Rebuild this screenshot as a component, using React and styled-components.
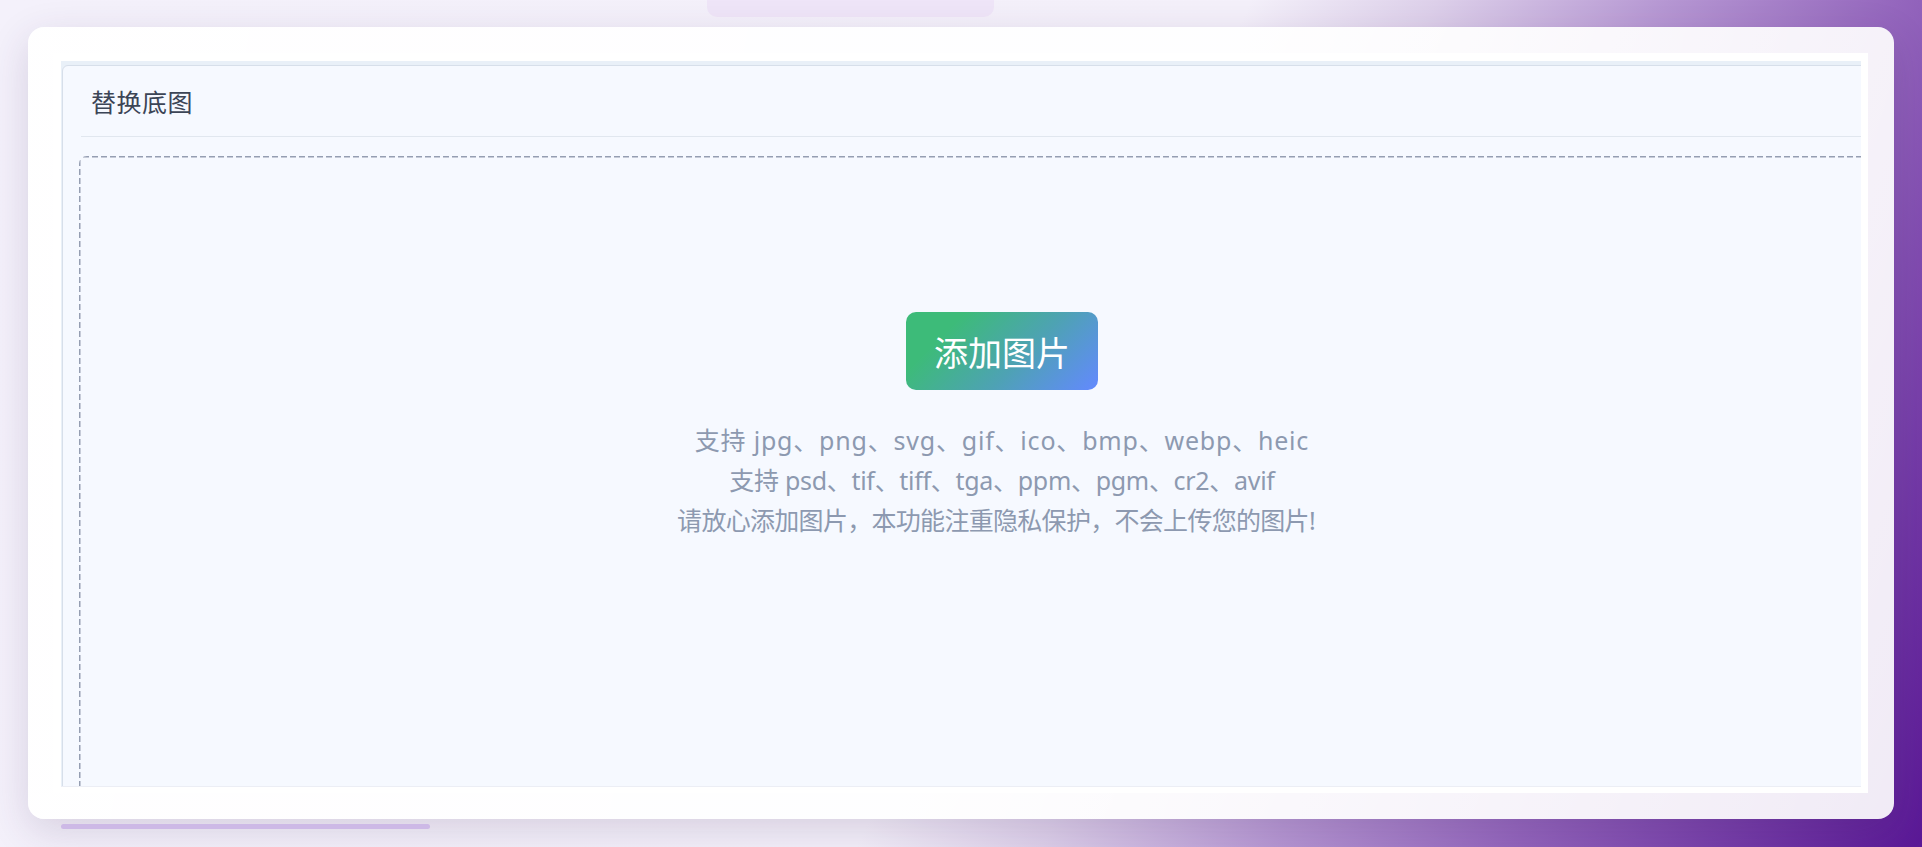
import React from "react";
import styled, { createGlobalStyle } from "styled-components";

const GlobalStyle = createGlobalStyle`
  * { box-sizing: border-box; }
  html, body {
    margin: 0;
    padding: 0;
    height: 100%;
  }
  body {
    font-family: "Noto Sans", "Noto Sans CJK SC", sans-serif;
    background: linear-gradient(115deg, #f4f1fb 0%, #f4f0fa 54%, #ddd0ea 62%, #b697d3 72%, #9466bd 82%, #5a1896 100%);
    overflow: hidden;
  }
`;

const Page = styled.div`
  width: 1922px;
  height: 847px;
  padding: 0 28px;
  display: flex;
  flex-direction: column;
`;

const TopTab = styled.div`
  width: 287px;
  height: 17px;
  margin-left: 679px;
  margin-bottom: 10px;
  background: #efe5f8;
  border-radius: 0 0 10px 10px;
`;

const Card = styled.div`
  width: 1866px;
  height: 792px;
  padding: 26px 26px 26px 25px;
  border-radius: 16px;
  background: linear-gradient(100deg, rgba(255, 255, 255, 0.97) 0%, rgba(255, 255, 255, 0.95) 50%, rgba(255, 255, 255, 0.91) 100%);
  box-shadow: 0 12px 40px rgba(60, 40, 90, 0.16);
  display: flex;
`;

const Frame = styled.div`
  flex: 1;
  min-width: 0;
  background: #ffffff;
  padding: 8px 7px 6px 8px;
  display: flex;
`;

const Viewport = styled.div`
  flex: 1;
  min-width: 0;
  overflow: hidden;
  background: #e9f0f8;
  padding: 4px 0 0 1px;
  border-bottom: 1px solid #eceef5;
`;

const Panel = styled.section`
  width: 1880px;
  height: 900px;
  background: #f6f9ff;
  border: 1px solid #d7dfea;
  border-radius: 6px;
  padding: 0 18px;
`;

const PanelHeader = styled.header`
  height: 71px;
  padding-left: 10px;
  display: flex;
  align-items: center;
  border-bottom: 1.5px solid #e1e7ef;
`;

const PanelTitle = styled.h2`
  margin: 0;
  font-family: "Noto Sans CJK SC", sans-serif;
  font-weight: 400;
  font-size: 25px;
  color: #3c4556;
  letter-spacing: 0.5px;
`;

const dash = "#959eb2";

const DropZone = styled.div`
  margin-top: 19px;
  margin-left: -2px;
  width: 1846px;
  height: 760px;
  border-radius: 8px;
  background-image:
    repeating-linear-gradient(90deg, ${dash} 0 6px, transparent 6px 9px),
    repeating-linear-gradient(180deg, ${dash} 0 6px, transparent 6px 9px),
    repeating-linear-gradient(90deg, ${dash} 0 6px, transparent 6px 9px),
    repeating-linear-gradient(180deg, ${dash} 0 6px, transparent 6px 9px);
  background-size: 100% 1.5px, 1.5px 100%, 100% 1.5px, 1.5px 100%;
  background-position: 4px 0, 0 4px, 4px 100%, 100% 4px;
  background-repeat: no-repeat;
  padding-top: 156px;
  display: flex;
  flex-direction: column;
  align-items: center;
`;

const AddButton = styled.button`
  width: 192px;
  height: 78px;
  border: none;
  border-radius: 10px;
  background: linear-gradient(135deg, #3dbb79 22%, #4ea2b4 60%, #6389ff 100%);
  color: #ffffff;
  font-family: "Noto Sans CJK SC", sans-serif;
  font-size: 34px;
  font-weight: 400;
  display: flex;
  align-items: center;
  justify-content: center;
  cursor: pointer;
`;

const Hints = styled.div`
  margin-top: 30px;
  display: flex;
  flex-direction: column;
  align-items: center;
`;

const HintLine = styled.p`
  margin: 0;
  font-family: "Noto Sans", "Noto Sans CJK SC", sans-serif;
  font-size: 25px;
  line-height: 40px;
  color: #8d99b0;
  white-space: nowrap;
  letter-spacing: ${(p) => p.$spacing || "0"};
  padding-right: ${(p) => p.$trail || "0"};
`;

const BottomBar = styled.div`
  width: 369px;
  height: 5px;
  margin-top: 5px;
  margin-left: 33px;
  border-radius: 3px;
  background: #cdb9e6;
`;

export default function App() {
  return (
    <>
      <GlobalStyle />
      <Page>
        <TopTab />
        <Card>
          <Frame>
            <Viewport>
              <Panel>
                <PanelHeader>
                  <PanelTitle>替换底图</PanelTitle>
                </PanelHeader>
                <DropZone>
                  <AddButton>添加图片</AddButton>
                  <Hints>
                    <HintLine $spacing="0.8px">支持 jpg、png、svg、gif、ico、bmp、webp、heic</HintLine>
                    <HintLine $spacing="-0.3px">支持 psd、tif、tiff、tga、ppm、pgm、cr2、avif</HintLine>
                    <HintLine $spacing="-0.7px" $trail="12px">请放心添加图片，本功能注重隐私保护，不会上传您的图片!</HintLine>
                  </Hints>
                </DropZone>
              </Panel>
            </Viewport>
          </Frame>
        </Card>
        <BottomBar />
      </Page>
    </>
  );
}
